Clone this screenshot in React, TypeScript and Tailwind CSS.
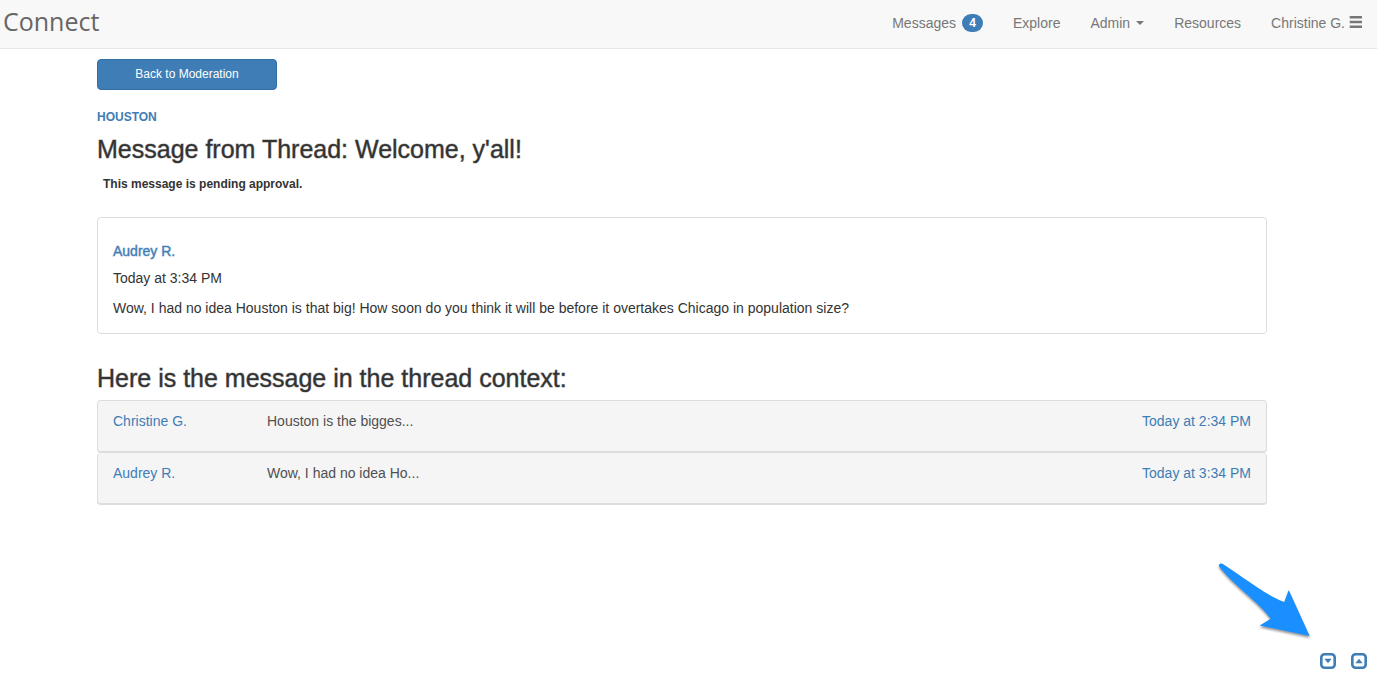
import React from "react";

type ThreadMessage = {
  author: string;
  excerpt: string;
  time: string;
};

const threadMessages: ThreadMessage[] = [
  { author: "Christine G.", excerpt: "Houston is the bigges...", time: "Today at 2:34 PM" },
  { author: "Audrey R.", excerpt: "Wow, I had no idea Ho...", time: "Today at 3:34 PM" },
];

// Translucent outline gives the regular face a medium weight.
const headingClass = "text-[25px] leading-7 [-webkit-text-stroke:1px_rgba(51,51,51,0.45)]";

function Header() {
  return (
    <header className="flex h-[49px] items-center justify-between border-b border-[#e7e7e7] bg-[#f8f8f8] pr-[15px] pl-[3px] text-[#777]">
      <a href="#home" className="pb-[6px] font-['Open_Sans','Noto_Sans',sans-serif] text-[25px] leading-8 text-[#666]">
        Connect
      </a>
      <nav aria-label="Main" className="flex items-center gap-[30px] pb-[2px] text-sm leading-5">
        <a href="#messages" className="flex items-center gap-[6px]">
          Messages
          <span className="flex h-[18px] w-[21px] items-center justify-center rounded-full bg-[#3e7db5] text-xs font-bold text-white">
            4
          </span>
        </a>
        <a href="#explore">Explore</a>
        <button type="button" className="flex items-center gap-[6px]">
          Admin
          <svg width="8" height="4" viewBox="0 0 8 4" fill="currentColor" aria-hidden="true">
            <path d="M0 0h8L4 4z" />
          </svg>
        </button>
        <a href="#resources">Resources</a>
        <button type="button" className="flex items-center gap-1">
          Christine G.
          <svg width="13" height="12" viewBox="0 0 13 12" fill="currentColor" className="-mt-[2px]" aria-hidden="true">
            <path d="M.7 0h12.300v2.600h-12.300zM.7 4.700h12.300v2.600h-12.300zM.7 9.400h12.300v2.600h-12.300z" />
          </svg>
        </button>
      </nav>
    </header>
  );
}

function CollapseIcon({ up = false }: { up?: boolean }) {
  return (
    <svg width="16" height="16" viewBox="0 0 16 16" aria-hidden="true">
      <rect x="1.3" y="1.3" width="13.4" height="13.4" rx="3.2" fill="none" stroke="currentColor" strokeWidth="2.6" />
      <path d={up ? "M4.4 10.300h7.200L8 5.700z" : "M4.4 5.700h7.200L8 10.300z"} fill="currentColor" />
    </svg>
  );
}

function PointerArrow() {
  return (
    <svg
      width="110"
      height="90"
      viewBox="0 0 110 90"
      className="pointer-events-none absolute right-[57px] bottom-[37px] drop-shadow-[0_2px_1px_rgba(0,0,0,0.4)]"
      aria-hidden="true"
    >
      <path
        d="M9.200 11.500C8 9.500 10 7.500 12.500 8.800C35 23 55 40 74.300 47L78.700 35L99.700 81L49.700 70.500L60.700 63.700C50 48 24 31 9.200 11.500Z"
        fill="#1a8fff"
      />
    </svg>
  );
}

export default function App() {
  return (
    <div className="relative min-h-screen bg-white font-['Liberation_Sans',Arial,sans-serif] text-sm leading-5 text-[#333]">
      <Header />

      <main className="pt-[10px] pr-[13px]">
        <div className="mx-auto max-w-[1170px]">
          <button
            type="button"
            className="block h-[31px] w-[180px] rounded-[4px] border border-[#326ea4] bg-[#3e7db5] pb-[2px] text-xs text-white"
          >
            Back to Moderation
          </button>

          <p className="mt-[17px] text-xs leading-5 font-bold">
            <a href="#houston" className="text-[#3e7db5]">HOUSTON</a>
          </p>
          <h1 className={`mt-2 ${headingClass}`}>Message from Thread: Welcome, y'all!</h1>
          <p className="mt-[11px] pl-[6px] text-xs leading-5 font-bold">This message is pending approval.</p>

          <article className="mt-[23px] rounded-[4px] border border-[#ddd] px-[15px] pt-[23px] pb-[15px]">
            <h2 className="[-webkit-text-stroke:1px_rgba(62,125,181,0.45)]">
              <a href="#audrey" className="text-[#3e7db5]">Audrey R.</a>
            </h2>
            <p className="mt-[7px]">Today at 3:34 PM</p>
            <p className="mt-[10px]">
              Wow, I had no idea Houston is that big! How soon do you think it will be before it overtakes Chicago in
              population size?
            </p>
          </article>

          <h2 className={`mt-[30px] ${headingClass}`}>Here is the message in the thread context:</h2>
          <ul className="mt-2">
            {threadMessages.map((message) => (
              <li
                key={message.author}
                className="flex h-[52px] rounded-[4px] border-x border-b-2 border-[#ddd] bg-[#f5f5f5] px-[15px] pt-[10px] first:h-[53px] first:border-t"
              >
                <a href="#author" className="w-[154px] shrink-0 text-[#3e7db5]">{message.author}</a>
                <p className="min-w-0 flex-1 truncate text-[#505050]">{message.excerpt}</p>
                <a href="#message" className="text-[#3e7db5]">{message.time}</a>
              </li>
            ))}
          </ul>
        </div>
      </main>

      <PointerArrow />
      <div className="absolute right-[10px] bottom-[13px] flex gap-[15px] text-[#3e7db5]">
        <button type="button" aria-label="Scroll to bottom">
          <CollapseIcon />
        </button>
        <button type="button" aria-label="Scroll to top">
          <CollapseIcon up />
        </button>
      </div>
    </div>
  );
}
